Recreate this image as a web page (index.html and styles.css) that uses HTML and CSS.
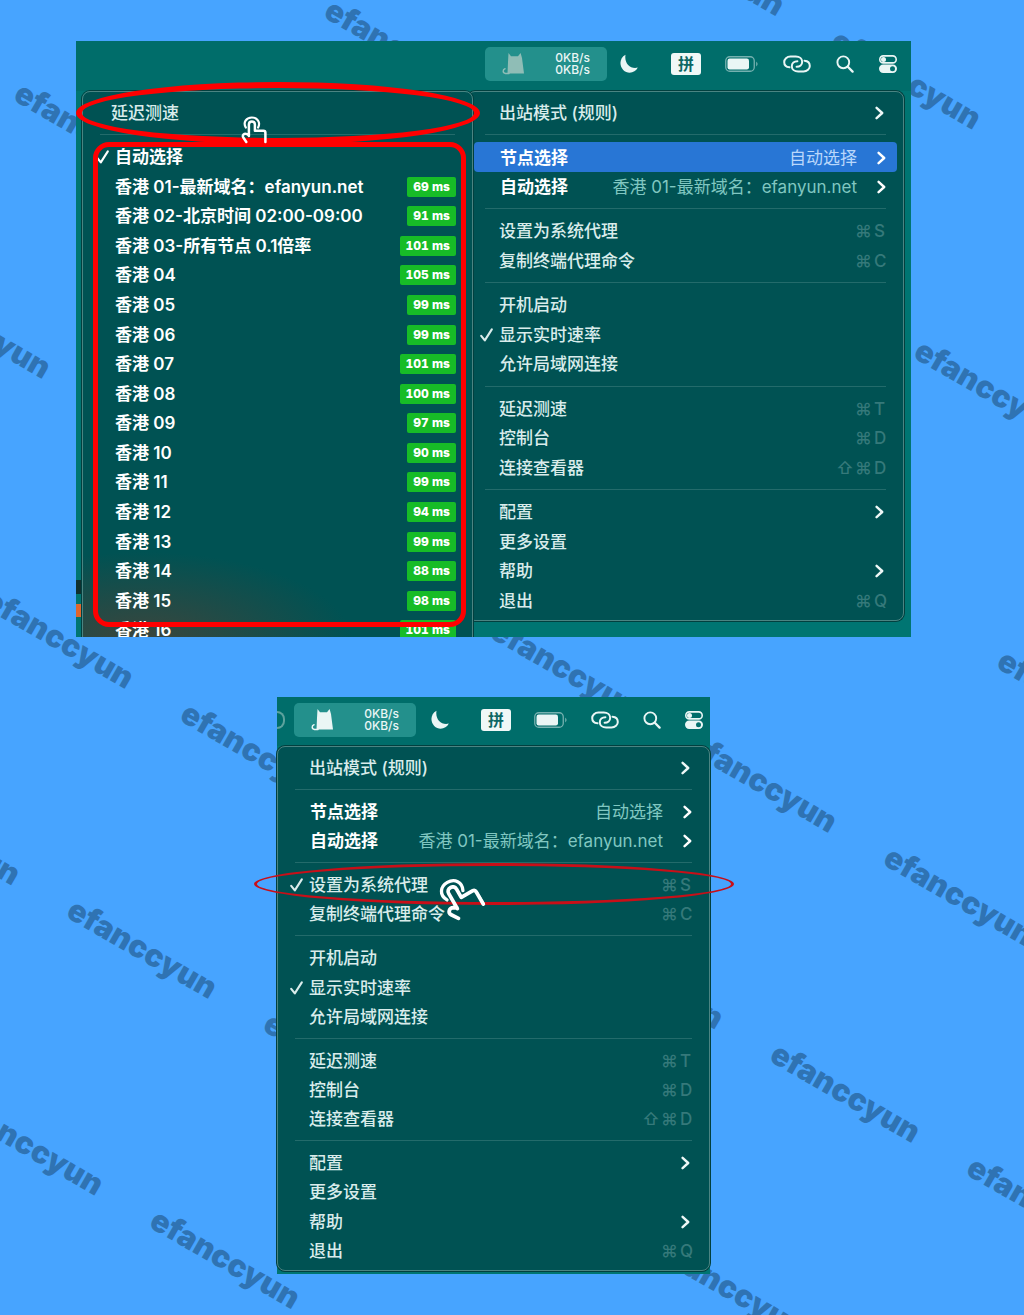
FILE: index.html
```html
<!DOCTYPE html>
<html lang="zh-CN">
<head>
<meta charset="utf-8">
<meta name="viewport" content="width=device-width, initial-scale=1">
<title>efanccyun</title>
<link rel="stylesheet" href="styles.css">
</head>
<body>
<svg class="defs" aria-hidden="true">
  <symbol id="check" viewBox="0 0 13 14"><path d="M1.2 7.8 4.8 12.4 11.8 1.4" fill="none" stroke="currentColor" stroke-width="2.1" stroke-linecap="round" stroke-linejoin="round"/></symbol>
  <symbol id="chev" viewBox="0 0 9 14"><path d="M1.6 1.8 7.2 7 1.6 12.2" fill="none" stroke="currentColor" stroke-width="2.4" stroke-linecap="round" stroke-linejoin="round"/></symbol>
  <symbol id="cat" viewBox="0 0 24 24"><path d="M6.5 1 9 4.2h7L18.6 1 20 6l2 15.5H5.500L6 10Z" fill="currentColor"/><path d="M7 21.400H3.500C.5 21 .6 17.500 3 16.800" fill="none" stroke="currentColor" stroke-width="1.500" stroke-linecap="round"/></symbol>
  <symbol id="moon" viewBox="0 0 20 20"><path d="M6.500.800C.5 4 0 11.500 4.200 16c4.500 4.600 12 3.200 14.600-2.400C11.500 15.500 5 9.500 6.500.800Z" fill="currentColor"/></symbol>
  <symbol id="battery" viewBox="0 0 34 16"><rect x=".75" y=".75" width="28.500" height="14.500" rx="4" fill="none" stroke="currentColor" stroke-opacity=".5" stroke-width="1.300"/><rect x="2.500" y="2.500" width="21.500" height="11" rx="2.200" fill="currentColor"/><path d="M31.300 5.500q2.400 2.500 0 5Z" fill="currentColor" fill-opacity=".6"/></symbol>
  <symbol id="link" viewBox="0 0 28 18"><path d="M6.500 12.300C3 12 1.200 9.800 1.200 7S3.800 1.500 7.500 1.500h5.300c3.700 0 6.400 2.300 6.400 5.300 0 3-2.400 4.900-5.600 4.900" fill="none" stroke="currentColor" stroke-width="2" stroke-linecap="round"/><path d="M21.500 5.700c3.500.3 5.300 2.500 5.300 5.300s-2.600 5.500-6.300 5.500h-5.300c-3.700 0-6.400-2.300-6.400-5.300 0-3 2.400-4.900 5.600-4.900" fill="none" stroke="currentColor" stroke-width="2" stroke-linecap="round"/></symbol>
  <symbol id="search" viewBox="0 0 18 18"><circle cx="7.300" cy="7.300" r="5.900" fill="none" stroke="currentColor" stroke-width="1.900"/><path d="m11.800 11.800 4.800 4.800" stroke="currentColor" stroke-width="2.300" stroke-linecap="round"/></symbol>
  <symbol id="control" viewBox="0 0 18 18"><rect x=".8" y=".9" width="16.400" height="7" rx="3.500" fill="none" stroke="currentColor" stroke-width="1.600"/><circle cx="4.500" cy="4.400" r="2.500" fill="currentColor"/><rect y="9.600" width="18" height="8.400" rx="4.200" fill="currentColor"/><circle cx="13.500" cy="13.800" r="2.500" fill="#04706d"/></symbol>
  <symbol id="tap" viewBox="0 0 26 28"><path d="M4.800 11.500C1.800 6.300 5.200 1.500 10.800 1.500s9 4.800 6.300 10" fill="none" stroke="currentColor" stroke-width="2.200" stroke-linecap="round"/><path d="M7.900 20V8.500c0-4 6-4 6 0v6.300h8.600c1.200 0 1.900.7 1.900 1.900V26M7.900 19.500l-2-1.400c-2.600-1.300-5 1-3.600 3.400l3 4.500" fill="none" stroke="currentColor" stroke-width="2.500" stroke-linejoin="round" stroke-linecap="round"/></symbol>
</svg>

<svg class="watermark" aria-hidden="true">
  <g transform="translate(69 909) rotate(30)">
    <text x="0" y="-1135">efanccyun</text><text x="227" y="-1135">efanccyun</text>
    <text x="-227" y="-908">efanccyun</text><text x="454" y="-908">efanccyun</text>
    <text x="-454" y="-681">efanccyun</text><text x="681" y="-681">efanccyun</text>
    <text x="-454" y="-454">efanccyun</text><text x="227" y="-454">efanccyun</text><text x="454" y="-454">efanccyun</text><text x="681" y="-454">efanccyun</text>
    <text x="-227" y="-227">efanccyun</text><text x="0" y="-227">efanccyun</text><text x="454" y="-227">efanccyun</text><text x="681" y="-227">efanccyun</text><text x="908" y="-227">efanccyun</text>
    <text x="-227" y="0">efanccyun</text><text x="0" y="0">efanccyun</text><text x="227" y="0">efanccyun</text><text x="681" y="0">efanccyun</text>
    <text x="0" y="227">efanccyun</text><text x="227" y="227">efanccyun</text>
  </g>
</svg>

<main class="page">
  <section class="shot wide">
    <header class="bar">
      <button class="app dim"><svg class="cat"><use href="#cat"/></svg><span class="speed">0KB/s<br>0KB/s</span></button>
      <svg class="moon"><use href="#moon"/></svg>
      <span class="ime">拼</span>
      <svg class="battery"><use href="#battery"/></svg>
      <svg class="link"><use href="#link"/></svg>
      <svg class="search"><use href="#search"/></svg>
      <svg class="control"><use href="#control"/></svg>
    </header>
    <div class="menus">
      <i class="desk-mark"></i>
      <nav class="menu nodes">
        <button class="item">延迟测速</button>
        <hr>
        <button class="item node"><svg class="check"><use href="#check"/></svg>自动选择</button>
        <button class="item node">香港 01-最新域名：efanyun.net<b class="tag">69 ms</b></button>
        <button class="item node">香港 02-北京时间 02:00-09:00<b class="tag">91 ms</b></button>
        <button class="item node">香港 03-所有节点 0.1倍率<b class="tag">101 ms</b></button>
        <button class="item node">香港 04<b class="tag">105 ms</b></button>
        <button class="item node">香港 05<b class="tag">99 ms</b></button>
        <button class="item node">香港 06<b class="tag">99 ms</b></button>
        <button class="item node">香港 07<b class="tag">101 ms</b></button>
        <button class="item node">香港 08<b class="tag">100 ms</b></button>
        <button class="item node">香港 09<b class="tag">97 ms</b></button>
        <button class="item node">香港 10<b class="tag">90 ms</b></button>
        <button class="item node">香港 11<b class="tag">99 ms</b></button>
        <button class="item node">香港 12<b class="tag">94 ms</b></button>
        <button class="item node">香港 13<b class="tag">99 ms</b></button>
        <button class="item node">香港 14<b class="tag">88 ms</b></button>
        <button class="item node">香港 15<b class="tag">98 ms</b></button>
        <button class="item node">香港 16<b class="tag">101 ms</b></button>
        <i class="ring ring-test"></i>
        <i class="frame"></i>
        <svg class="tap"><use href="#tap"/></svg>
      </nav>
      <nav class="menu main">
        <button class="item top">出站模式 (规则)<svg class="chev"><use href="#chev"/></svg></button>
        <hr>
        <button class="item pick active">节点选择<span class="value">自动选择</span><svg class="chev"><use href="#chev"/></svg></button>
        <button class="item pick">自动选择<span class="value">香港 01-最新域名：efanyun.net</span><svg class="chev"><use href="#chev"/></svg></button>
        <hr>
        <button class="item">设置为系统代理<kbd><span>⌘</span><span>S</span></kbd></button>
        <button class="item">复制终端代理命令<kbd><span>⌘</span><span>C</span></kbd></button>
        <hr>
        <button class="item">开机启动</button>
        <button class="item"><svg class="check"><use href="#check"/></svg>显示实时速率</button>
        <button class="item">允许局域网连接</button>
        <hr>
        <button class="item">延迟测速<kbd><span>⌘</span><span>T</span></kbd></button>
        <button class="item">控制台<kbd><span>⌘</span><span>D</span></kbd></button>
        <button class="item">连接查看器<kbd><span>⇧</span><span>⌘</span><span>D</span></kbd></button>
        <hr>
        <button class="item top">配置<svg class="chev"><use href="#chev"/></svg></button>
        <button class="item">更多设置</button>
        <button class="item top">帮助<svg class="chev"><use href="#chev"/></svg></button>
        <button class="item">退出<kbd><span>⌘</span><span>Q</span></kbd></button>
      </nav>
    </div>
  </section>

  <section class="shot narrow">
    <header class="bar">
      <i class="edge-icon"></i>
      <button class="app"><svg class="cat"><use href="#cat"/></svg><span class="speed">0KB/s<br>0KB/s</span></button>
      <svg class="moon"><use href="#moon"/></svg>
      <span class="ime">拼</span>
      <svg class="battery"><use href="#battery"/></svg>
      <svg class="link"><use href="#link"/></svg>
      <svg class="search"><use href="#search"/></svg>
      <svg class="control"><use href="#control"/></svg>
    </header>
    <nav class="menu main">
      <button class="item top">出站模式 (规则)<svg class="chev"><use href="#chev"/></svg></button>
      <hr>
      <button class="item pick">节点选择<span class="value">自动选择</span><svg class="chev"><use href="#chev"/></svg></button>
      <button class="item pick">自动选择<span class="value">香港 01-最新域名：efanyun.net</span><svg class="chev"><use href="#chev"/></svg></button>
      <hr>
      <button class="item"><svg class="check"><use href="#check"/></svg>设置为系统代理<kbd><span>⌘</span><span>S</span></kbd></button>
      <button class="item">复制终端代理命令<kbd><span>⌘</span><span>C</span></kbd></button>
      <hr>
      <button class="item">开机启动</button>
      <button class="item"><svg class="check"><use href="#check"/></svg>显示实时速率</button>
      <button class="item">允许局域网连接</button>
      <hr>
      <button class="item">延迟测速<kbd><span>⌘</span><span>T</span></kbd></button>
      <button class="item">控制台<kbd><span>⌘</span><span>D</span></kbd></button>
      <button class="item">连接查看器<kbd><span>⇧</span><span>⌘</span><span>D</span></kbd></button>
      <hr>
      <button class="item top">配置<svg class="chev"><use href="#chev"/></svg></button>
      <button class="item">更多设置</button>
      <button class="item top">帮助<svg class="chev"><use href="#chev"/></svg></button>
      <button class="item">退出<kbd><span>⌘</span><span>Q</span></kbd></button>
      <i class="ring ring-proxy"></i>
      <svg class="tap"><use href="#tap"/></svg>
    </nav>
  </section>
</main>
</body>
</html>
```

FILE: styles.css
```css
* { box-sizing: border-box; }

body {
  margin: 0;
  position: relative;
  background: #47a4ff;
  font-family: Inter, "Noto Sans CJK SC", "DejaVu Sans", sans-serif;
  font-size: 17px;
}

button {
  border: 0;
  margin: 0;
  padding: 0;
  background: none;
  color: inherit;
  font: inherit;
  text-align: left;
}

svg { display: block; flex: none; }
.defs { display: none; }

/* Repeating diagonal site name behind the panels */
.watermark {
  position: absolute;
  inset: 0;
  width: 100%;
  height: 100%;
  overflow: hidden;
}
.watermark text {
  fill: #2f73b3;
  font-family: Inter, sans-serif;
  font-weight: 900;
  font-size: 31px;
  dominant-baseline: middle;
}

.page {
  position: relative;
  display: flex;
  flex-direction: column;
  align-items: center;
  gap: 60px;
  padding: 41px 37px 41px 0;
}

.shot { background: #007572; width: 100%; }
.wide { max-width: 835px; height: 596px; overflow: hidden; }
.narrow { max-width: 433px; padding-bottom: 3px; }

/* Menu bar */
.bar {
  position: relative;
  display: flex;
  align-items: center;
  justify-content: flex-end;
  gap: 24px;
  height: 50px;
  padding: 0 14px 4px 0;
  background: #006d6a;
  color: #eaf6f5;
}
.narrow .bar { height: 49px; padding: 0 7px 4px 0; gap: 23px; }
.app {
  display: flex;
  align-items: center;
  justify-content: space-between;
  width: 122px;
  height: 34px;
  padding: 0 17px;
  margin-right: -12px;
  border-radius: 5px;
  background: #23908c;
}
.narrow .app { margin-right: -9px; }
.cat { width: 24px; height: 24px; }
.dim .cat { color: #8fbdb6; }
.speed { font-size: 12px; line-height: 12px; font-weight: 500; }
.moon { width: 28px; height: 20px; padding-right: 8px; }
.ime {
  width: 30px;
  border-radius: 3px;
  background: #f0f8f7;
  color: #0c6765;
  font-size: 16px;
  font-weight: 700;
  line-height: 22px;
  text-align: center;
}
.battery { width: 34px; height: 16px; }
.link { width: 28px; height: 18px; }
.search { width: 20px; height: 18px; }
.control { width: 18px; height: 18px; }
.edge-icon {
  position: absolute;
  left: 0;
  top: 14px;
  width: 8px;
  height: 18px;
  border: 2px solid #5da29d;
  border-left: 0;
  border-radius: 0 9px 9px 0;
}

/* Drop-down menus */
.menus { position: relative; display: flex; align-items: flex-start; padding: 0 7px 0 6px; }
.menu {
  position: relative;
  display: grid;
  padding: 6px 6px 5px;
  border: 1px solid #4b8482;
  border-radius: 8px;
  background: #005253;
  box-shadow: 0 0 0 1px #02403f;
  color: #d9eceb;
  font-weight: 500;
}
.menu hr { width: auto; height: 1px; margin: auto 11px; border: 0; background: #236b6b; }
.main {
  min-height: 530px;
  grid-template-rows: 2fr 1fr 2fr 2fr 1fr 2fr 2fr 1fr 2fr 2fr 2fr 1fr 2fr 2fr 2fr 1fr 2fr 2fr 2fr 2fr;
}
.wide .main { flex: 1; margin-left: -6px; }
.narrow .main { min-height: 525px; }
.nodes {
  z-index: 1;
  width: 391px;
  height: 560px;
  grid-template-rows: 2fr 1fr repeat(17, 2fr);
  background: radial-gradient(ellipse 210px 90px at 60px 550px, #3d453c, #005253);
}

.item {
  position: relative;
  display: flex;
  align-items: center;
  padding: 1px 11px 0 25px;
  border-radius: 4px;
  white-space: nowrap;
  line-height: 24px;
}
.nodes .item { padding-left: 22px; }
.nodes .node { padding: 0 10px 0 26px; color: #fff; font-weight: 600; }
.check { width: 13px; height: 14px; margin-left: -19px; margin-right: 6px; }
.chev { width: 9px; height: 14px; margin-left: auto; color: #eef8f7; }
.top { padding-right: 13px; }
.pick { color: #fff; font-weight: 600; padding: 1px 11px 0 26px; }
.pick .chev { margin-left: 20px; color: #fff; }
.value { margin-left: auto; color: #80c7c1; font-weight: 400; }
.active { background: #2876d5; }
.active .value { color: #b9d7fb; }
.tag {
  margin-left: auto;
  padding: 0 6px;
  border-radius: 2px;
  background: #17bc27;
  font-size: 12px;
  font-weight: 800;
  font-variant-numeric: tabular-nums;
  line-height: 20px;
}
kbd { display: flex; gap: 6px; margin-left: auto; color: #35797a; font: inherit; }
kbd span { width: 13px; }
kbd span:last-child { width: 12px; }

/* Hand-drawn call-outs */
.ring { position: absolute; border-radius: 50%; }
.ring-test { left: -7px; top: -10px; width: 404px; height: 62px; border: 6px solid #f00; }
.ring-proxy { left: -24px; top: 116px; width: 480px; height: 42px; border: 3px solid #c80f18; }
.frame { position: absolute; left: 10px; top: 50px; width: 373px; height: 485px; border: 5px solid #f00; border-radius: 16px; }
.tap { position: absolute; color: #fff; }
.nodes .tap { left: 158px; top: 24px; width: 26px; height: 28px; }
.narrow .tap { left: 162px; top: 129px; width: 39px; height: 42px; transform: rotate(-30deg); }

/* Desktop icons peeking out beside the node list */
.desk-mark {
  position: absolute;
  left: 0;
  top: 489px;
  width: 6px;
  height: 37px;
  background: linear-gradient(#10302f 14px, #007572 14px, #007572 24px, #e0662f 24px);
}
```
